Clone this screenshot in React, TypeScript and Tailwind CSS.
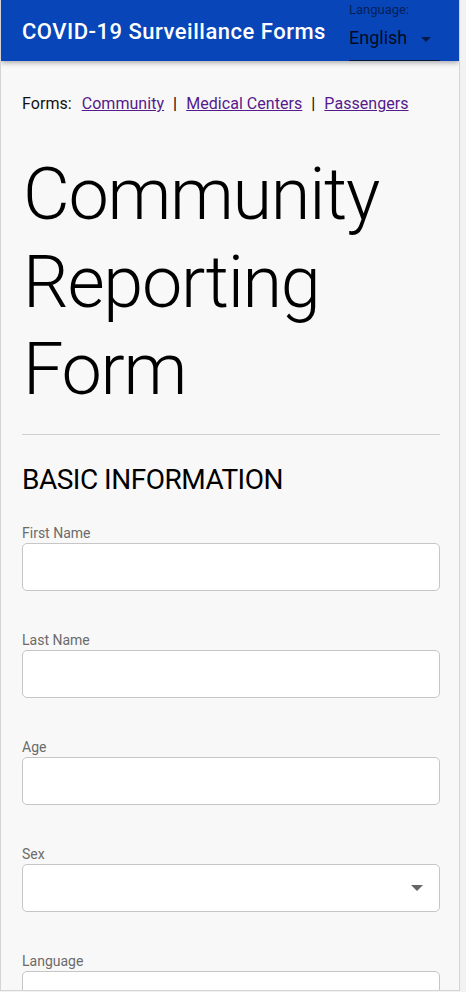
import React from "react";

const Field = ({ label, select }: { label: string; select?: boolean }) => (
  <div className="mb-[39px]">
    <div className="h-[20px] text-[14px] leading-[20px] text-[#6b6b6b]">{label}</div>
    <div className="relative h-[48px] rounded-[5px] border border-[#c6c6c6] bg-white">
      {select && (
        <svg className="absolute right-[16px] top-[20px]" width="12" height="6" viewBox="0 0 12 6">
          <path d="M0 0 L12 0 L6 6 Z" fill="#666" />
        </svg>
      )}
    </div>
  </div>
);

export default function App() {
  return (
    <div
      className="flex h-[992px] w-[466px] overflow-hidden bg-[#f2f2f2]"
      style={{ fontFamily: "Roboto, 'Noto Sans', sans-serif" }}
    >
      <div className="relative flex h-[991px] w-[460px] shrink-0 flex-col overflow-hidden border-b border-l border-r border-[#d4d4d4] bg-[#f8f8f8]">
        <header className="relative z-10 flex h-[61px] shrink-0 items-start justify-between bg-[#0745b8] pl-[21px] pr-[19px] shadow-[0_2px_5px_rgba(0,0,0,0.3)]">
          <div className="pt-[19px] text-[22px] font-medium leading-[26px] tracking-[0.5px] text-white">
            COVID-19 Surveillance Forms
          </div>
          <div className="flex h-[61px] w-[91px] flex-col border-b border-black/70">
            <div className="pt-[2px] text-[13px] leading-[15px] text-black/55">Language:</div>
            <div className="mt-[10px] flex items-center justify-between pr-[9px]">
              <span className="text-[18px] leading-[22px] text-black/85">English</span>
              <svg width="10" height="5" viewBox="0 0 10 5" className="mt-[2px]">
                <path d="M0 0 L10 0 L5 5 Z" fill="rgba(0,0,0,0.6)" />
              </svg>
            </div>
          </div>
        </header>

        <main className="pl-[21px] pr-[19px]">
          <div className="mt-[31px] flex items-baseline text-[16px] leading-[24px] tracking-[0.05px] text-[#111]">
            <span>Forms:</span>
            <a className="ml-[10px] text-[#551a8b] underline" href="#">Community</a>
            <span className="mx-[9px] font-medium">|</span>
            <a className="text-[#551a8b] underline" href="#">Medical Centers</a>
            <span className="mx-[9px] font-medium">|</span>
            <a className="text-[#551a8b] underline" href="#">Passengers</a>
          </div>

          <h1 className="mt-[35px] pl-[1px] text-[72px] font-light leading-[87.5px] tracking-[-1.3px] text-black">
            Community
            <br />
            Reporting
            <br />
            Form
          </h1>

          <div className="mt-[20px] h-px bg-[#d0d0d0]" />

          <h2 className="mt-[28px] text-[28px] font-normal leading-[34px] tracking-[-0.5px] text-black">
            BASIC INFORMATION
          </h2>

          <div className="mt-[26px]">
            <Field label="First Name" />
            <Field label="Last Name" />
            <Field label="Age" />
            <Field label="Sex" select />
            <Field label="Language" />
          </div>
        </main>
      </div>
    </div>
  );
}
